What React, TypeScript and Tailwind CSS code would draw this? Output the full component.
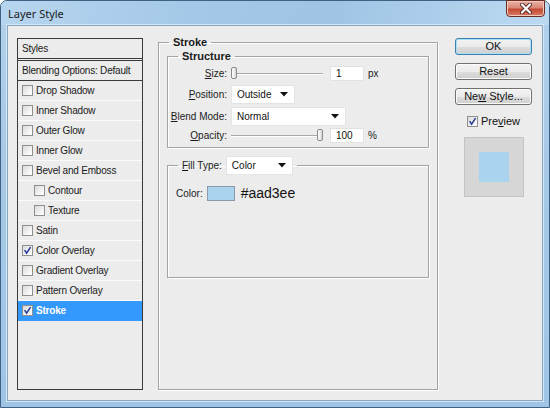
import React from "react";

const ui = "font-['Liberation_Sans',Arial,sans-serif]";

function Box({ checked }: { checked?: boolean }) {
  return (
    <span className="w-[11px] h-[11px] shrink-0 border border-[#8e8f8f] bg-[linear-gradient(135deg,#dadada,#f6f6f6_70%,#ffffff)] flex items-center justify-center">
      {checked && (
        <svg width="9" height="9" viewBox="0 0 9 9">
          <path d="M1.6 4.2 L3.6 7.2 L7.6 1.2" fill="none" stroke="#24399a" strokeWidth="1.5" />
        </svg>
      )}
    </span>
  );
}

function Arrow() {
  return (
    <svg width="8" height="5" viewBox="0 0 8 5" className="shrink-0">
      <path d="M0 0 H8 L4 4.5 Z" fill="#111" />
    </svg>
  );
}

function Select({ value, w }: { value: string; w: string }) {
  return (
    <div className={`${w} h-[19px] bg-white border border-[#e4e4e4] flex items-center justify-between pl-[5px] pr-[6px] text-[10px] text-[#111]`}>
      <span>{value}</span>
      <Arrow />
    </div>
  );
}

function Slider({ right }: { right?: boolean }) {
  return (
    <div className="relative w-[92px] h-[13px] flex items-center">
      <div className="w-full h-[2px] border-t border-[#a8a8a8] bg-white" />
      <div
        className={`absolute top-0 ${right ? "left-[86px]" : "left-0"} w-[6px] h-[12px] rounded-[2px] border border-[#8a8a8a] bg-[linear-gradient(to_right,#ffffff,#d8d8d8)]`}
      />
    </div>
  );
}

function Field({ value }: { value: string }) {
  return (
    <div className="w-[34px] h-[15px] bg-white border border-[#e2e2e2] pl-[5px] text-[10px] leading-[13px] text-[#111]">
      {value}
    </div>
  );
}

function Btn({ children, primary }: { children: React.ReactNode; primary?: boolean }) {
  return (
    <div
      className={`h-[17px] rounded-[3px] border ${
        primary ? "border-[#3c7fb1] shadow-[inset_0_0_0_1px_#a6e0f8]" : "border-[#707070] shadow-[inset_0_0_0_1px_#fbfbfb]"
      } bg-[linear-gradient(to_bottom,#f3f3f3_0%,#ebebeb_50%,#dddddd_51%,#cfcfcf_100%)] flex items-center justify-center text-[11px] text-[#111]`}
    >
      {children}
    </div>
  );
}

const styles: { name: string; checked?: boolean; sub?: boolean; active?: boolean }[] = [
  { name: "Drop Shadow" },
  { name: "Inner Shadow" },
  { name: "Outer Glow" },
  { name: "Inner Glow" },
  { name: "Bevel and Emboss" },
  { name: "Contour", sub: true },
  { name: "Texture", sub: true },
  { name: "Satin" },
  { name: "Color Overlay", checked: true },
  { name: "Gradient Overlay" },
  { name: "Pattern Overlay" },
  { name: "Stroke", checked: true, active: true },
];

function StyleList() {
  return (
    <div className="ml-[9px] mt-[12px] w-[126px] h-[352px] border border-[#3a3a3a] flex flex-col text-[10px] tracking-[-0.2px] text-[#1a1a1a]">
      <div className="h-[20px] border-b border-[#3a3a3a] flex items-center pl-[4px]">Styles</div>
      <div className="mt-[1px] h-[21px] border-t border-b border-[#3a3a3a] flex items-center pl-[4px]">
        Blending Options: Default
      </div>
      {styles.map((s) => (
        <div
          key={s.name}
          className={`h-[20px] shrink-0 border-b flex items-center gap-[3px] ${s.sub ? "pl-[16px]" : "pl-[4px]"} ${
            s.active ? "bg-[#3399ff] border-[#3399ff] text-white font-bold" : "border-[#fafafa]"
          }`}
        >
          <Box checked={s.checked} />
          <span>{s.name}</span>
        </div>
      ))}
    </div>
  );
}

function StrokePanel() {
  return (
    <fieldset className="ml-[15px] mt-[9px] w-[280px] h-[355px] border border-[#a3a3a3] shadow-[inset_1px_1px_0_#ffffff,1px_1px_0_#ffffff] px-[8px] text-[10px] text-[#1a1a1a]">
      <legend className="ml-[2px] px-[4px] text-[11px] leading-[14px] font-bold">Stroke</legend>

      <fieldset className="border border-[#a3a3a3] shadow-[inset_1px_1px_0_#ffffff,1px_1px_0_#ffffff] pb-[4px]">
        <legend className="ml-[10px] px-[4px] text-[11px] leading-[14px] font-bold">Structure</legend>
        <div className="mt-[3px] h-[15px] flex items-center">
          <span className="w-[59px] text-right">
            <span className="underline">S</span>ize:
          </span>
          <div className="ml-[4px]">
            <Slider />
          </div>
          <div className="ml-[7px]">
            <Field value="1" />
          </div>
          <span className="ml-[4px]">px</span>
        </div>
        <div className="mt-[4px] h-[19px] flex items-center">
          <span className="w-[59px] text-right">
            <span className="underline">P</span>osition:
          </span>
          <div className="ml-[4px]">
            <Select value="Outside" w="w-[64px]" />
          </div>
        </div>
        <div className="mt-[3px] h-[19px] flex items-center">
          <span className="w-[59px] text-right">
            <span className="underline">B</span>lend Mode:
          </span>
          <div className="ml-[4px]">
            <Select value="Normal" w="w-[115px]" />
          </div>
        </div>
        <div className="mt-[2px] h-[15px] flex items-center">
          <span className="w-[59px] text-right">
            <span className="underline">O</span>pacity:
          </span>
          <div className="ml-[4px]">
            <Slider right />
          </div>
          <div className="ml-[7px]">
            <Field value="100" />
          </div>
          <span className="ml-[4px]">%</span>
        </div>
      </fieldset>

      <fieldset className="mt-[8px] border border-[#a3a3a3] shadow-[inset_1px_1px_0_#ffffff,1px_1px_0_#ffffff] h-[122px]">
        <legend className="ml-[10px] px-[4px] flex items-center gap-[4px]">
          <span>
            <span className="underline">F</span>ill Type:
          </span>
          <Select value="Color" w="w-[67px]" />
        </legend>
        <div className="mt-[8px] ml-[8px] flex items-center">
          <span>Color:</span>
          <div className="ml-[4px] w-[28px] h-[15px] border border-[#8c9aab] bg-[#aad3ee]" />
          <span className={`ml-[6px] text-[14px] text-[#111] ${ui}`}>#aad3ee</span>
        </div>
      </fieldset>
    </fieldset>
  );
}

function Buttons() {
  return (
    <div className="ml-[17px] mt-[12px] w-[77px] flex flex-col text-[#111]">
      <Btn primary>OK</Btn>
      <div className="mt-[8px]">
        <Btn>Reset</Btn>
      </div>
      <div className="mt-[8px]">
        <Btn>
          Ne<span className="underline">w</span>&nbsp;Style...
        </Btn>
      </div>
      <div className="mt-[8px] flex items-center justify-center gap-[3px] text-[11px]">
        <Box checked />
        <span>
          Pre<span className="underline">v</span>iew
        </span>
      </div>
      <div className="mt-[7px] self-center w-[60px] h-[60px] border border-[#c4c4c4] bg-[#d6d6d6] flex items-center justify-center">
        <div className="w-[30px] h-[30px] bg-[#aad3ee]" />
      </div>
    </div>
  );
}

function TitleBar() {
  return (
    <div className="h-[24px] flex items-start justify-between bg-[linear-gradient(100deg,#b7d5ef_0%,#a4c8e7_35%,#9fc4e4_60%,#bcd9f1_100%)] rounded-t-[6px]">
      <span className="pl-[7px] pt-[5px] text-[11px] text-[#1b1b1b] font-['Noto_Sans',sans-serif]">Layer Style</span>
      <div className="mt-[-1px] mr-[4px] w-[39px] h-[17px] rounded-b-[4px] border border-[#6b2b23] bg-[linear-gradient(to_bottom,#e9b3a6_0%,#d98878_45%,#c44a35_55%,#d87b62_100%)] shadow-[inset_0_0_0_1px_#f3c8bd] flex items-center justify-center">
        <svg width="14" height="11" viewBox="0 0 14 11">
          <path d="M3 1.5 L11 9.5 M11 1.5 L3 9.5" stroke="#5a2a24" strokeWidth="4" strokeLinecap="round" />
          <path d="M3 1.5 L11 9.5 M11 1.5 L3 9.5" stroke="#ffffff" strokeWidth="2.2" strokeLinecap="round" />
        </svg>
      </div>
    </div>
  );
}

export default function App() {
  return (
    <div className={`w-[550px] h-[408px] bg-white ${ui}`}>
      <div className="w-[550px] h-[408px] rounded-t-[7px] border border-[#3e6283] bg-[linear-gradient(to_bottom,#b2d1ec,#a7c9e7_40%,#9fc5e6_100%)] flex flex-col">
        <TitleBar />
        <div className="flex-1 mx-[6px] mb-[6px] border border-[#87a6c4] bg-[#ececec] shadow-[0_0_0_1px_#d5e6f5] flex items-start">
          <StyleList />
          <StrokePanel />
          <Buttons />
        </div>
      </div>
    </div>
  );
}
